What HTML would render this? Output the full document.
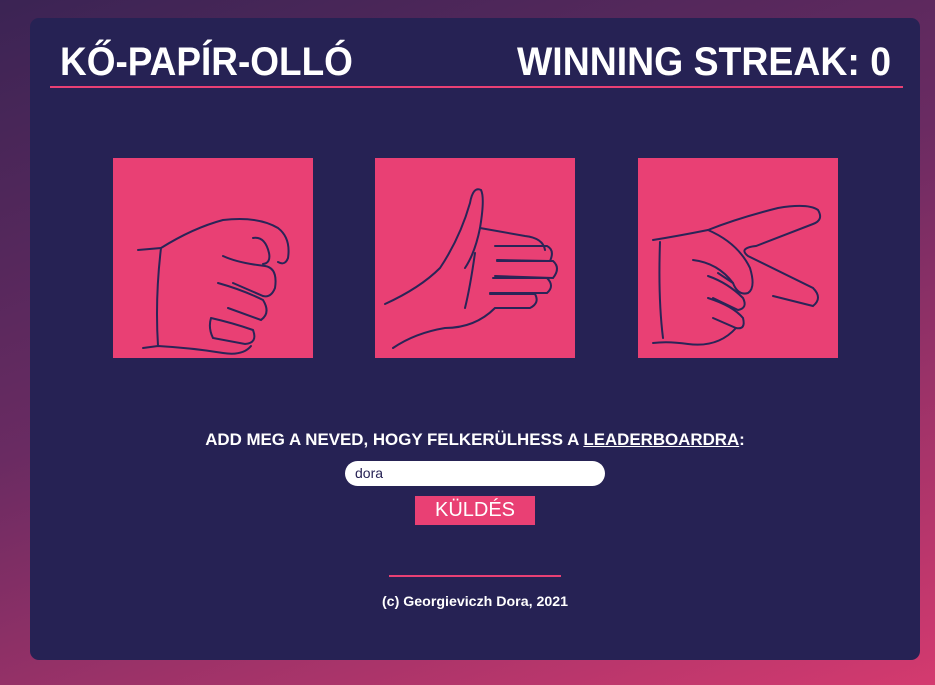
<!DOCTYPE html>
<html><head><meta charset="utf-8"><style>
html,body{margin:0;padding:0;width:935px;height:685px;overflow:hidden}
body{background:linear-gradient(160deg,#3b2454 0%,#6a2b62 45%,#d43a6f 100%);font-family:"Liberation Sans",sans-serif;position:relative}
.panel{position:absolute;left:30px;top:18px;width:890px;height:642px;background:#262254;border-radius:9px}
.h{position:absolute;top:40px;color:#fff;font-weight:bold;font-size:40px;line-height:44px;transform-origin:left top;white-space:nowrap}
.line{position:absolute;left:50px;top:86px;width:853px;height:2px;background:#e94074}
.box{position:absolute;top:158px;width:200px;height:200px;background:#e94074}
.box svg{width:200px;height:200px}
.lbl{position:absolute;top:430px;left:30px;width:890px;text-align:center;color:#fff;font-weight:bold;font-size:16.9px}
.inp{position:absolute;left:345px;top:461px;width:260px;height:25px;background:#fff;border-radius:13px;color:#262254;font-size:14px;line-height:25px;box-sizing:border-box;padding-left:10px}
.btn{position:absolute;left:415px;top:496px;width:120px;height:29px;background:#e94074;color:#fff;font-size:20px;text-align:center;line-height:29px}
.fl{position:absolute;left:389px;top:575px;width:172px;height:2px;background:#e94074}
.ft{position:absolute;top:594px;left:30px;width:890px;text-align:center;color:#fff;font-weight:bold;font-size:14.2px}
</style></head><body>
<div class="panel"></div>
<div class="h" style="left:60px;transform:scaleX(0.924)">KŐ-PAPÍR-OLLÓ</div>
<div class="h" style="left:517px;transform:scaleX(0.935)">WINNING STREAK: 0</div>
<div class="line"></div>
<div class="box" style="left:113px"><svg viewBox="0 0 200 200" fill="none" stroke="#2a2457" stroke-width="2" stroke-linecap="round">
<path d="M25 92 L48 90 Q80 70 110 62 Q145 58 165 70 Q178 80 175 100 Q172 108 165 104"/>
<path d="M140 80 Q152 78 156 95 Q158 105 150 106"/>
<path d="M110 98 Q125 105 152 108 Q165 110 162 130 Q158 140 150 138 L120 125"/>
<path d="M105 125 Q130 132 150 142 Q158 155 148 162 L115 150"/>
<path d="M98 160 Q120 165 140 172 Q145 185 132 186 L100 180 Q95 170 98 160"/>
<path d="M30 190 L45 188 Q80 190 110 195 Q130 198 138 188"/>
<path d="M48 90 Q42 140 45 188"/>
</svg></div>
<div class="box" style="left:375px"><svg viewBox="0 0 200 200" fill="none" stroke="#2a2457" stroke-width="2" stroke-linecap="round">
<path d="M10 146 Q45 130 65 110 Q85 80 95 45 Q98 28 106 32 Q110 40 105 70 Q100 95 90 110"/>
<path d="M105 70 L150 78 Q168 80 170 92"/>
<path d="M120 88 L172 88 Q180 92 175 103 L122 102"/>
<path d="M122 103 L178 103 Q186 110 178 120 L120 118"/>
<path d="M118 120 L172 120 Q180 128 172 135 L115 135"/>
<path d="M115 136 L160 136 Q165 145 155 150 L120 150 Q100 170 70 170 Q40 175 18 190"/>
<path d="M100 95 Q95 130 90 150"/>
</svg></div>
<div class="box" style="left:638px"><svg viewBox="0 0 200 200" fill="none" stroke="#2a2457" stroke-width="2" stroke-linecap="round">
<path d="M15 82 Q40 78 70 72 Q100 60 140 50 Q170 45 180 52 Q186 62 175 66 L118 88 Q100 90 110 98 L175 130 Q185 140 175 148 L135 138"/>
<path d="M70 72 Q100 85 112 110 Q118 130 110 135 Q100 138 95 125 L80 115"/>
<path d="M55 102 Q80 105 95 125"/>
<path d="M70 118 Q90 125 105 140 Q110 150 100 152 L75 140"/>
<path d="M70 140 Q95 148 105 160 Q108 172 98 170 L75 160"/>
<path d="M15 185 Q30 183 50 186 Q80 190 98 170"/>
<path d="M22 84 Q20 140 25 180"/>
</svg></div>
<div class="lbl">ADD MEG A NEVED, HOGY FELKERÜLHESS A <u>LEADERBOARDRA</u>:</div>
<div class="inp">dora</div>
<div class="btn">KÜLDÉS</div>
<div class="fl"></div>
<div class="ft">(c) Georgieviczh Dora, 2021</div>
</body></html>
